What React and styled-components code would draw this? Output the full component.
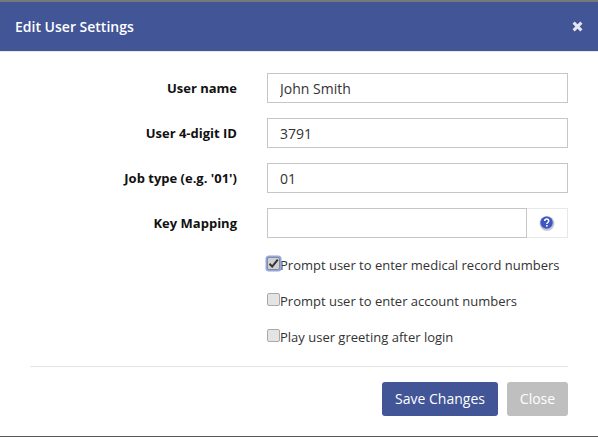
import React from "react";
import styled, { createGlobalStyle } from "styled-components";

const Global = createGlobalStyle`
  html, body { margin: 0; padding: 0; background: #fff; }
  body { font-family: "Open Sans", "Liberation Sans", sans-serif; }
  * { box-sizing: border-box; }
`;

const Page = styled.div`
  width: 598px;
  height: 437px;
  overflow: hidden;
  display: flex;
  flex-direction: column;
  background: #fff;
  border-top: 2px solid #77767a;
  border-bottom: 1px solid #5a5a5a;
`;

const Header = styled.header`
  height: 50px;
  flex: none;
  background: #415597;
  border-bottom: 1px solid #e6e9f2;
  color: #fff;
  display: flex;
  align-items: center;
  justify-content: space-between;
  padding: 0 15px;
`;

const Title = styled.h1`
  margin: 0;
  font-size: 14px;
  font-weight: 600;
  line-height: 20px;
`;

const CloseIcon = styled.svg`
  width: 11px;
  height: 11px;
  display: block;
`;

const Body = styled.main`
  flex: 1;
  padding: 21px 30px 0;
  display: flex;
  flex-direction: column;
`;

const Row = styled.div`
  display: grid;
  grid-template-columns: 207px 301px;
  column-gap: 30px;
  align-items: center;
  height: 30px;
  margin-bottom: 15px;
`;

const Label = styled.label`
  font-size: 13px;
  font-weight: 700;
  color: #111;
  text-align: right;
`;

const Input = styled.input`
  width: 100%;
  min-width: 0;
  height: 30px;
  border: 1px solid #c6c6c6;
  border-radius: 0;
  padding: 0 12px;
  font: 400 14px "Open Sans", sans-serif;
  color: #333;
  outline: none;
  background: #fff;
`;

const InputGroup = styled.div`
  display: flex;
  height: 30px;
`;

const Addon = styled.div`
  flex: none;
  width: 41px;
  border: 1px solid #e8e8e8;
  border-left: 0;
  display: flex;
  align-items: center;
  justify-content: center;
`;

const Checks = styled.div`
  margin-left: 237px;
  display: flex;
  flex-direction: column;
  padding-top: 2px;
`;

const Check = styled.label`
  display: flex;
  align-items: center;
  height: 20px;
  margin-bottom: ${(p) => p.$gap}px;
  font-size: 13px;
  color: #333;
  white-space: nowrap;
`;

const Box = styled.span`
  flex: none;
  position: relative;
  top: -2px;
  width: 13px;
  height: 13px;
  border-radius: 2px;
  background: ${(p) => (p.$checked ? "#cfcfd4" : "#e4e4e4")};
  border: 1px solid ${(p) => (p.$checked ? "#8a8a90" : "#a9a9a9")};
  box-shadow: ${(p) => (p.$checked ? "0 0 0 1.5px #8fa6e8" : "none")};
  display: flex;
  align-items: center;
  justify-content: center;
`;

const Rule = styled.hr`
  width: 538px;
  flex: none;
  border: 0;
  border-top: 1px solid #e5e5e5;
  margin: 0;
`;

const Footer = styled.footer`
  display: flex;
  justify-content: flex-end;
  gap: 9px;
  padding-top: 15px;
`;

const Button = styled.button`
  height: 34px;
  width: ${(p) => p.$w}px;
  border: 0;
  border-radius: 3px;
  background: ${(p) => p.$bg};
  color: #fff;
  font: 400 14px "Open Sans", sans-serif;
  padding: 0 0 2px;
`;

const HelpIcon = () => (
  <svg width="16" height="16" viewBox="0 0 16 16" aria-hidden="true">
    <circle cx="8" cy="8.4" r="7.4" fill="#c4c6d0" />
    <circle cx="7.6" cy="7.6" r="6.2" fill="#3f55c4" />
    <path d="M5.7 6.1c0-1.3 1-2 2-2s2 .7 2 1.9c0 1.5-1.9 1.5-1.9 3" fill="none" stroke="#fff" strokeWidth="1.5" />
    <rect x="7" y="10" width="1.6" height="1.6" fill="#fff" />
  </svg>
);

const Tick = () => (
  <svg width="11" height="11" viewBox="0 0 11 11" aria-hidden="true">
    <path d="M1.5 5.8 4.2 8.6 9.8 1.6" fill="none" stroke="#333" strokeWidth="2" />
  </svg>
);

export default function App() {
  return (
    <Page>
      <Global />
      <Header>
        <Title>Edit User Settings</Title>
        <CloseIcon viewBox="0 0 11 11" aria-hidden="true">
          <path d="M1.6 1.6 9.4 9.4M9.4 1.6 1.6 9.4" stroke="#e4e7f2" strokeWidth="3" />
        </CloseIcon>
      </Header>
      <Body>
        <Row>
          <Label>User name</Label>
          <Input defaultValue="John Smith" />
        </Row>
        <Row>
          <Label>User 4-digit ID</Label>
          <Input defaultValue="3791" />
        </Row>
        <Row>
          <Label>Job type (e.g. '01')</Label>
          <Input defaultValue="01" />
        </Row>
        <Row>
          <Label>Key Mapping</Label>
          <InputGroup>
            <Input />
            <Addon><HelpIcon /></Addon>
          </InputGroup>
        </Row>
        <Checks>
          <Check $gap={16}><Box $checked><Tick /></Box>Prompt user to enter medical record numbers</Check>
          <Check $gap={16}><Box />Prompt user to enter account numbers</Check>
          <Check $gap={19}><Box />Play user greeting after login</Check>
        </Checks>
        <Rule />
        <Footer>
          <Button $w={116} $bg="#415597">Save Changes</Button>
          <Button $w={61} $bg="#bfbfbf">Close</Button>
        </Footer>
      </Body>
    </Page>
  );
}
